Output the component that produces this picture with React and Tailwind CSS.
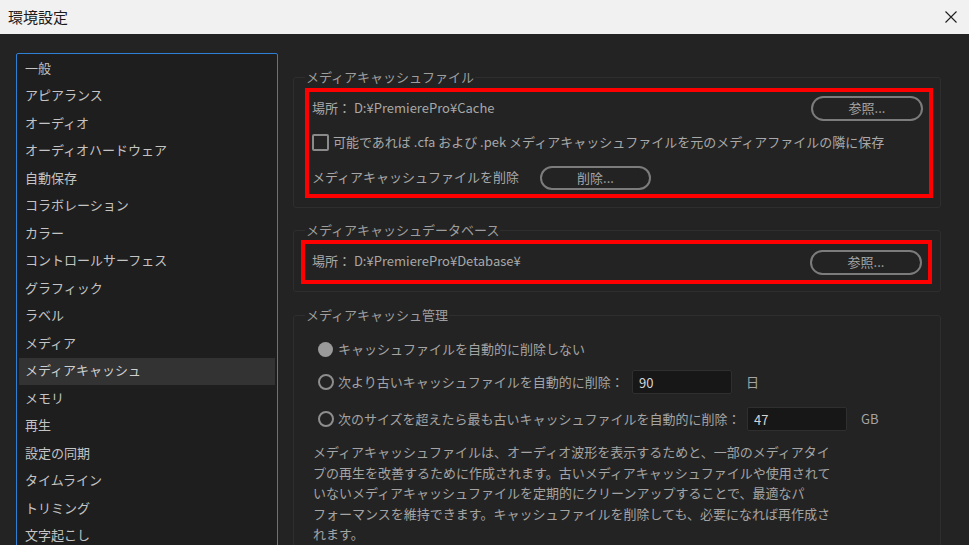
import React from "react";

const FONT = { fontFamily: '"Noto Sans CJK JP", "Noto Sans", sans-serif' };

const navItems = [
  "一般",
  "アピアランス",
  "オーディオ",
  "オーディオハードウェア",
  "自動保存",
  "コラボレーション",
  "カラー",
  "コントロールサーフェス",
  "グラフィック",
  "ラベル",
  "メディア",
  "メディアキャッシュ",
  "メモリ",
  "再生",
  "設定の同期",
  "タイムライン",
  "トリミング",
  "文字起こし",
];

function PillButton({ children, className = "" }) {
  return (
    <div
      className={
        "flex items-center justify-center rounded-full border-2 border-[#7c7c7c] pb-[2px] text-[13px] leading-none text-[#a4a4a4] " +
        className
      }
    >
      {children}
    </div>
  );
}

function Radio({ checked }) {
  return checked ? (
    <div className="h-[15px] w-[15px] shrink-0 rounded-full bg-[#9a9a9a]" />
  ) : (
    <div className="h-[16px] w-[16px] shrink-0 rounded-full border-2 border-[#8e8e8e]" />
  );
}

export default function App() {
  return (
    <div className="h-[545px] w-[969px] overflow-hidden bg-[#232323]" style={FONT}>
      {/* title bar */}
      <div className="flex h-[34px] items-center justify-between bg-[#f1f1f1] pl-[8px] pr-[12px]">
        <span className="pb-[2px] text-[15px] leading-none text-[#1b1b1b]">環境設定</span>
        <svg width="12" height="12" viewBox="0 0 12 12">
          <path d="M0.5 0.5 L11.5 11.5 M11.5 0.5 L0.5 11.5" stroke="#1e1e1e" strokeWidth="1.1" />
        </svg>
      </div>

      <div className="flex items-start">
        {/* left nav */}
        <div className="ml-[16px] mt-[19px] h-[520px] w-[262px] shrink-0 rounded-[2px] border border-[#2f7fd4] bg-[#1e1e1e] pt-[1px]">
          {navItems.map((item) => {
            const sel = item === "メディアキャッシュ";
            return (
              <div
                key={item}
                className={
                  "mx-[2px] flex h-[27.5px] items-center pb-[3px] pl-[6px] text-[13px] leading-none " +
                  (sel ? "bg-[#333333] text-[#cfcfcf]" : "text-[#c4c4c4]")
                }
              >
                {item}
              </div>
            );
          })}
        </div>

        {/* right content */}
        <div className="ml-[15px] w-[648px] shrink-0 pt-[34px]">
          {/* group 1 */}
          <fieldset className="rounded-[3px] border border-[#2e2e2e] pb-[9px] pl-[11px] pr-[7px]">
            <legend className="px-[1px] text-[13px] leading-[18px] text-[#9e9e9e]">
              メディアキャッシュファイル
            </legend>
            <div className="mt-[2px] flex h-[110px] flex-col border-4 border-[#ff0000] pl-[3px] pr-[6px] pt-[4px]">
              <div className="flex h-[25px] items-center justify-between">
                <span className="pb-[3px] text-[13px] leading-none text-[#a8a8a8]">
                  場所： D:¥PremierePro¥Cache
                </span>
                <PillButton className="h-[25px] w-[112px]">参照...</PillButton>
              </div>
              <div className="mt-[12px] flex h-[18px] items-center">
                <div className="h-[17px] w-[17px] shrink-0 rounded-[2px] border-2 border-[#8a8a8a]" />
                <span className="ml-[4px] pb-[2px] text-[13px] leading-none text-[#a8a8a8]">
                  可能であれば .cfa および .pek メディアキャッシュファイルを元のメディアファイルの隣に保存
                </span>
              </div>
              <div className="mt-[15px] flex h-[24px] items-center">
                <span className="w-[228px] shrink-0 pb-[4px] text-[13px] leading-none text-[#a8a8a8]">
                  メディアキャッシュファイルを削除
                </span>
                <PillButton className="h-[24px] w-[111px]">削除...</PillButton>
              </div>
            </div>
          </fieldset>

          {/* group 2 */}
          <fieldset className="mt-[13px] rounded-[3px] border border-[#2e2e2e] pb-[7px] pl-[7px] pr-[8px]">
            <legend className="ml-[4px] px-[1px] text-[13px] leading-[18px] text-[#9e9e9e]">
              メディアキャッシュデータベース
            </legend>
            <div className="mt-[1px] flex h-[44px] items-center justify-between border-4 border-[#ff0000] pl-[7px] pr-[6px]">
              <span className="pb-[3px] text-[13px] leading-none text-[#a8a8a8]">
                場所： D:¥PremierePro¥Detabase¥
              </span>
              <PillButton className="h-[25px] w-[112px]">参照...</PillButton>
            </div>
          </fieldset>

          {/* group 3 */}
          <fieldset className="mt-[14px] h-[260px] rounded-[3px] border border-[#2e2e2e]">
            <legend className="ml-[11px] px-[1px] text-[13px] leading-[18px] text-[#9e9e9e]">
              メディアキャッシュ管理
            </legend>
            <div className="pl-[24px] pt-[15px]">
              <div className="flex h-[20px] items-center">
                <Radio checked />
                <span className="ml-[5px] pb-[2px] text-[13px] leading-none text-[#a4a4a4]">
                  キャッシュファイルを自動的に削除しない
                </span>
              </div>
              <div className="mt-[11px] flex h-[24px] items-center">
                <Radio />
                <span className="ml-[4px] w-[294px] shrink-0 pb-[2px] text-[13px] leading-none text-[#a4a4a4]">
                  次より古いキャッシュファイルを自動的に削除：
                </span>
                <div className="flex h-[24px] w-[100px] items-center rounded-[2px] border border-[#2f2f2f] bg-[#171717] pl-[6px] text-[13px] leading-none text-[#d4d4d4]">
                  90
                </div>
                <span className="ml-[14px] pb-[2px] text-[13px] leading-none text-[#a4a4a4]">日</span>
              </div>
              <div className="mt-[13px] flex h-[24px] items-center">
                <Radio />
                <span className="ml-[4px] w-[409px] shrink-0 pb-[2px] text-[13px] leading-none text-[#a4a4a4]">
                  次のサイズを超えたら最も古いキャッシュファイルを自動的に削除：
                </span>
                <div className="flex h-[24px] w-[100px] items-center rounded-[2px] border border-[#2f2f2f] bg-[#171717] pl-[6px] text-[13px] leading-none text-[#d4d4d4]">
                  47
                </div>
                <span className="ml-[14px] pb-[2px] text-[13px] leading-none text-[#a4a4a4]">GB</span>
              </div>
            </div>
            <p className="mt-[11px] pl-[19px] text-[13px] leading-[20.5px] text-[#a4a4a4]">
              メディアキャッシュファイルは、オーディオ波形を表示するためと、一部のメディアタイ
              <br />
              プの再生を改善するために作成されます。古いメディアキャッシュファイルや使用されて
              <br />
              いないメディアキャッシュファイルを定期的にクリーンアップすることで、最適なパ
              <br />
              フォーマンスを維持できます。キャッシュファイルを削除しても、必要になれば再作成さ
              <br />
              れます。
            </p>
          </fieldset>
        </div>
      </div>
    </div>
  );
}
